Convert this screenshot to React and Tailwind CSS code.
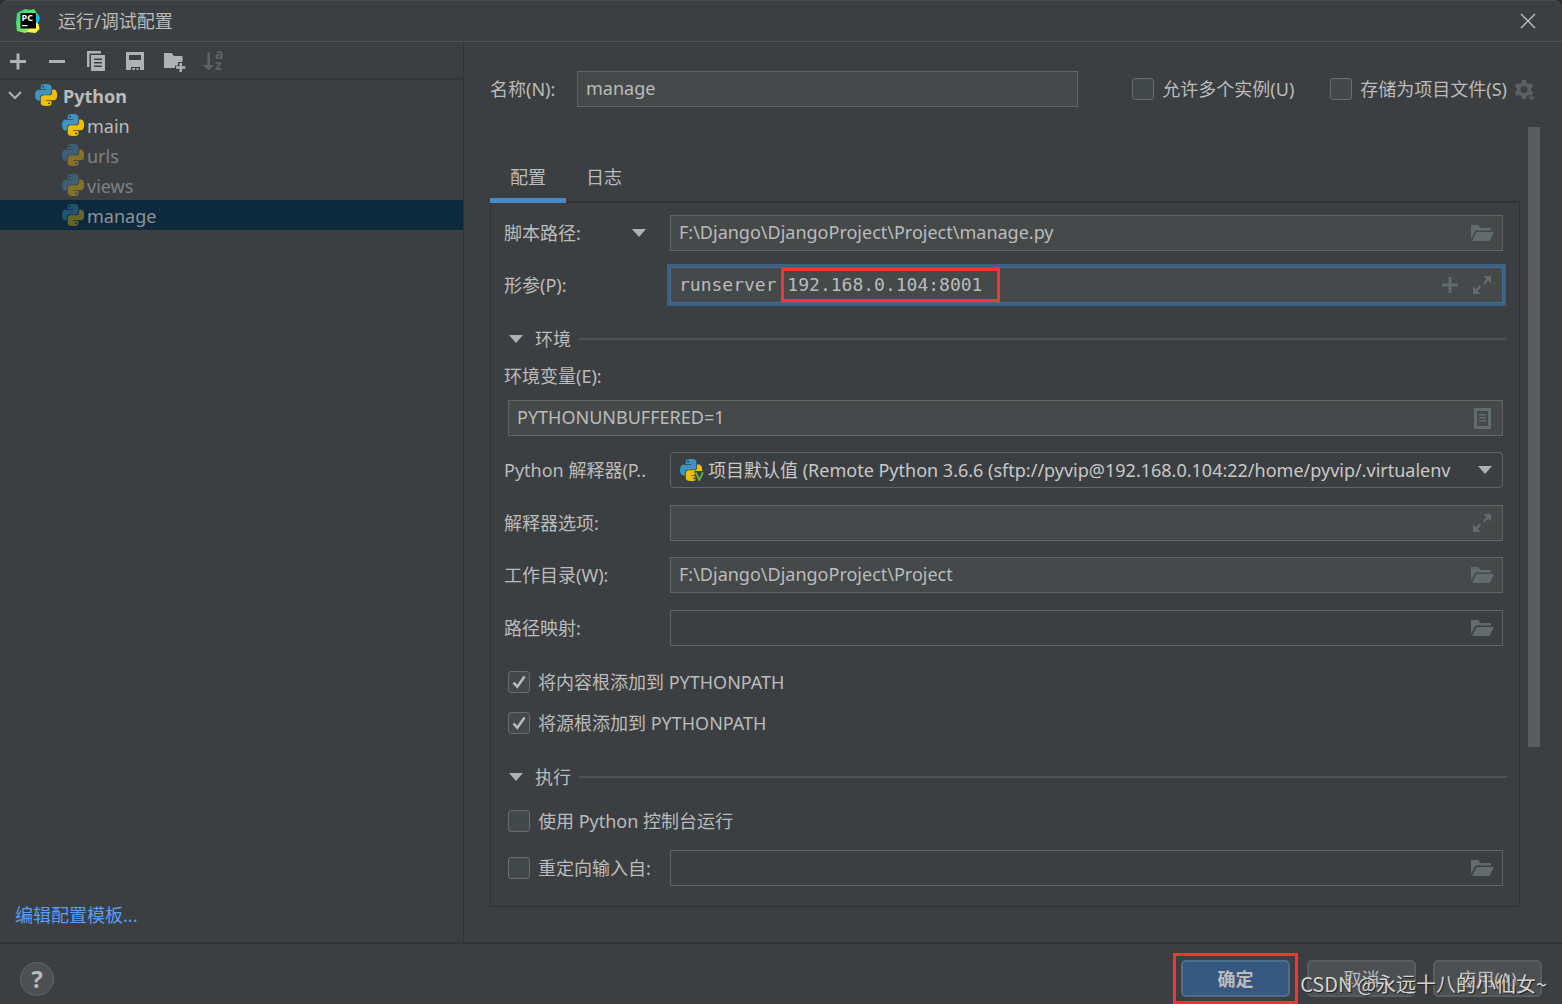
import React, { useState } from 'react';
import clsx from 'clsx';

function PythonIcon({ dim, venv }) {
    return (
        <svg viewBox="0 0 26 24" className={clsx('h-[22px] w-6 shrink-0', dim && 'opacity-40')} aria-hidden="true">
            <path
                fill="#3e93c1"
                fillRule="evenodd"
                d="M14.25.18l.9.2.73.26.59.3.45.32.34.34.25.34.16.33.1.3.04.26.02.2-.01.13V8.5l-.05.63-.13.55-.21.46-.26.38-.3.31-.33.25-.35.19-.35.14-.33.1-.3.07-.26.04-.21.02H8.77l-.69.05-.59.14-.5.22-.41.27-.33.32-.27.35-.2.36-.15.37-.1.35-.07.32-.04.27-.02.21v3.06H3.17l-.21-.03-.28-.07-.32-.12-.35-.18-.36-.26-.36-.36-.35-.46-.32-.59-.28-.73-.21-.88-.14-1.05-.05-1.23.06-1.22.16-1.04.24-.87.32-.71.36-.57.4-.44.42-.33.42-.24.4-.16.36-.1.32-.05.24-.01h.16l.06.01h8.16v-.83H6.18l-.01-2.75-.02-.37.05-.34.11-.31.17-.28.25-.26.31-.23.38-.2.44-.18.51-.15.58-.12.64-.1.71-.06.77-.04.84-.02 1.27.05zM7.95 2.16l-.23.33-.08.41.08.41.23.34.33.22.41.09.41-.09.33-.22.23-.34.08-.41-.08-.41-.23-.33-.33-.22-.41-.09-.41.09z"
            />
            <path
                fill="#f0bf0a"
                fillRule="evenodd"
                d="M21.04 6.11l.28.06.32.12.35.18.36.27.36.35.35.47.32.59.28.73.21.88.14 1.04.05 1.23-.06 1.23-.16 1.04-.24.86-.32.71-.36.57-.4.45-.42.33-.42.24-.4.16-.36.09-.32.05-.24.02-.16-.01h-8.22v.82h5.84l.01 2.76.02.36-.05.34-.11.31-.17.29-.25.25-.31.24-.38.2-.44.17-.51.15-.58.13-.64.09-.71.07-.77.04-.84.01-1.27-.04-1.07-.14-.9-.2-.73-.25-.59-.3-.45-.33-.34-.34-.25-.34-.16-.33-.1-.3-.04-.25-.02-.2.01-.13v-5.34l.05-.64.13-.54.21-.46.26-.38.3-.32.33-.24.35-.2.35-.14.33-.1.3-.06.26-.04.21-.02.13-.01h5.84l.69-.05.59-.14.5-.21.41-.28.33-.32.27-.35.2-.36.15-.36.1-.35.07-.32.04-.28.02-.21V6.07h2.09zM14.57 20.36l-.23.33-.08.41.08.41.23.33.33.23.41.08.41-.08.33-.23.23-.33.08-.41-.08-.41-.23-.33-.33-.23-.41-.08-.41.08z"
            />
            {venv && (
                <>
                    <path d="M15.500 13H26v11h-9z" fill="#3c3f41" />
                    <path d="M17 14.500l4 8.500 4-8.500" fill="none" stroke="#62b543" strokeWidth="2" />
                </>
            )}
        </svg>
    );
}

function AppLogo() {
    return (
        <svg viewBox="0 0 24 24" className="size-6" aria-hidden="true">
            <defs>
                <linearGradient id="logo" x1="0" y1="0" x2="1" y2="1">
                    <stop offset="0" stopColor="#21d789" />
                    <stop offset="0.5" stopColor="#5fe36b" />
                    <stop offset="1" stopColor="#fcf84a" />
                </linearGradient>
            </defs>
            <path d="M1 4l8-4 5 1 4-1 4 6v14l-4 3-4-1-5 2-8-2-1-8z" fill="url(#logo)" />
            <path d="M19 6l3-1 2 4-2 5-3-1z" fill="#07c3f2" />
            <path d="M19.500 14l3 1 1 5-4 4-9-1 4-4z" fill="#fcf84a" />
            <path d="M4.500 4h15.500v15.500H4.500z" fill="#000" />
            <text x="5.500" y="12" fontSize="9" fontWeight="700" fontFamily="Open Sans, sans-serif" fill="#fff">PC</text>
            <path d="M6 16h5.500v1.300H6z" fill="#fff" />
        </svg>
    );
}

const FolderIcon = () => (
    <svg viewBox="0 0 24 18" className="h-[18px] w-6" fill="#646b6e" aria-hidden="true">
        <path d="M1 1h7l2.500 3H21v2.500H5.500L1 15z" />
        <path d="M6.500 8H24l-4.500 9H2z" />
    </svg>
);

const ExpandIcon = () => (
    <svg viewBox="0 0 18 18" className="size-[18px]" fill="#646b6e" aria-hidden="true">
        <path d="M10.500 0H18v7.500l-2.700-2.700-3.800 3.700-1.600-1.600 3.500-4z" />
        <path d="M7.500 18H0v-7.500l2.700 2.700 3.800-3.700 1.600 1.600-3.500 4z" />
    </svg>
);

const PlusIcon = () => (
    <svg viewBox="0 0 16 16" className="size-4" fill="#646b6e" aria-hidden="true">
        <path d="M6.500 0h3v6.500H16v3H9.500V16h-3V9.500H0v-3h6.500z" />
    </svg>
);

const ListIcon = () => (
    <svg viewBox="0 0 17 21" className="h-[21px] w-[17px]" fill="#646b6e" aria-hidden="true">
        <path fillRule="evenodd" d="M0 0h17v21H0zM3 3v15h11V3z" />
        <path d="M5 6h7v1.500H5zM5 9h7v1.500H5zM5 12h7v1.500H5z" />
    </svg>
);

const Triangle = () => (
    <svg viewBox="0 0 14 8" className="h-2 w-3.5 shrink-0" fill="#afb1b3" aria-hidden="true">
        <path d="M0 0h14L7 8z" />
    </svg>
);

const toolbar = [
    { label: '添加', icon: <path d="M8.500 2.500h3V9H18v3h-6.500v6.500h-3V12H2V9h6.500z" /> },
    { label: '移除', icon: <path d="M2 9h16v3H2z" /> },
    {
        label: '复制',
        icon: (
            <>
                <path d="M1 0h14v2.500H3.500V16H1z" />
                <path fillRule="evenodd" d="M5 4h14v16H5zM8 7.500V9h8V7.500zM8 11v1.500h8V11zM8 14.500V16h8v-1.500z" />
            </>
        ),
    },
    { label: '保存', icon: <path fillRule="evenodd" d="M1 1h18v18h-4v-3H6v3H1zM4 4v5h12V4zM7.500 17h2.500v2H7.500zM11.500 17h2v2h-2z" /> },
    {
        label: '新建文件夹',
        icon: (
            <>
                <path d="M0 2h7.500L10 5h8.500v6H14v3.500h-3V17H0z" />
                <path d="M15.500 12h2.500v3.200h3.500v2.600H18V21h-2.500v-3.200H12v-2.600h3.500z" />
            </>
        ),
    },
    {
        label: '排序',
        off: true,
        icon: (
            <>
                <path d="M4.500 1.500h2.500V14H11l-5.200 5.500L0 14h4.500z" />
                <text x="12" y="8" fontSize="14" fontWeight="700" fontFamily="Open Sans, sans-serif">a</text>
                <text x="12" y="19" fontSize="14" fontWeight="700" fontFamily="Open Sans, sans-serif">z</text>
            </>
        ),
    },
];

const configs = [
    { name: 'main' },
    { name: 'urls', dim: true },
    { name: 'views', dim: true },
    { name: 'manage', dim: true },
];

function Checkbox({ id, label, defaultChecked }) {
    return (
        <label htmlFor={id} className="flex items-center gap-2 whitespace-nowrap">
            <span className="grid place-items-center">
                <input
                    id={id}
                    type="checkbox"
                    defaultChecked={defaultChecked}
                    className="peer col-start-1 row-start-1 size-[22px] appearance-none rounded-[3px] border border-[#6b6b6b] bg-[#43494a]"
                />
                <svg viewBox="0 0 14 14" className="pointer-events-none invisible col-start-1 row-start-1 size-3.5 peer-checked:visible" aria-hidden="true">
                    <path d="M1.500 7.500l3.800 4.200L12.500 1.500" fill="none" stroke="#bbb" strokeWidth="2.500" />
                </svg>
            </span>
            {label}
        </label>
    );
}

function Field({ id, value = '', plain, mono, focused, actions, children }) {
    return (
        <div
            className={clsx(
                'relative flex h-9 min-w-0 flex-1 items-center gap-3 border pr-2 pl-2',
                plain ? 'bg-[#3c3f41]' : 'bg-[#45494a]',
                focused ? 'border-[#466d94] ring-3 ring-[#3d6185]' : 'border-[#646464]'
            )}
        >
            <input
                id={id}
                defaultValue={value}
                className={clsx('min-w-0 flex-1 bg-transparent outline-none', mono ? "font-['DejaVu_Sans_Mono',monospace]" : 'pb-0.5')}
            />
            {actions}
            {children}
        </div>
    );
}

function IconButton({ label, children }) {
    return (
        <button type="button" aria-label={label} className="flex w-6 shrink-0 items-center justify-center">
            {children}
        </button>
    );
}

function Row({ id, label, className, extra, children }) {
    return (
        <div className={clsx('mr-1 flex items-center', className)}>
            <div className="flex w-[166px] shrink-0 items-center justify-between pr-6">
                <label htmlFor={id} className="whitespace-nowrap">{label}</label>
                {extra}
            </div>
            {children}
        </div>
    );
}

function Section({ title, className }) {
    return (
        <button type="button" className={clsx('flex h-7 w-full items-center pl-[5px]', className)}>
            <Triangle />
            <span className="ml-3">{title}</span>
            <span className="ml-2 h-0.5 flex-1 bg-[#505355]" />
        </button>
    );
}

export default function App() {
    const [selected, setSelected] = useState('manage');
    const [tab, setTab] = useState('配置');

    const browse = <IconButton label="浏览"><FolderIcon /></IconButton>;

    return (
        <div className="bg-[#2b2b2b]">
            <div className="relative flex min-h-screen flex-col overflow-hidden rounded-t-lg border-t border-[#4b4b4b] bg-[#3c3f41] font-['Noto_Sans','Noto_Sans_CJK_SC',sans-serif] text-[18px] leading-6 text-[#bbbbbb]">
                {/* Title bar */}
                <header className="flex h-[41px] items-center border-b border-[#515456] pr-6 pl-4">
                    <AppLogo />
                    <h1 className="ml-[18px] flex-1">运行/调试配置</h1>
                    <button type="button" aria-label="关闭" className="p-0.5">
                        <svg viewBox="0 0 16 16" className="size-4" stroke="#bbb" strokeWidth="1.500" aria-hidden="true">
                            <path d="M1 1l14 14M15 1L1 15" />
                        </svg>
                    </button>
                </header>

                <div className="flex flex-1">
                    {/* Configuration tree */}
                    <aside className="flex w-[464px] shrink-0 flex-col border-r border-[#323232]">
                        <div className="flex h-[38px] items-center gap-[19px] border-b-2 border-[#353637] pt-0.5 pl-2">
                            {toolbar.map((t) => (
                                <button key={t.label} type="button" aria-label={t.label} disabled={t.off}>
                                    <svg viewBox="0 0 20 21" className={clsx('h-[21px] w-5 overflow-visible', t.off ? 'fill-[#606365]' : 'fill-[#afb1b3]')} aria-hidden="true">
                                        {t.icon}
                                    </svg>
                                </button>
                            ))}
                        </div>
                        <div className="flex h-[30px] items-center pl-2 font-bold">
                            <svg viewBox="0 0 14 9" className="mr-[13px] h-[9px] w-3.5" fill="none" stroke="#afb1b3" strokeWidth="2" aria-hidden="true">
                                <path d="M1 1l6 6 6-6" />
                            </svg>
                            <PythonIcon />
                            <span className="ml-1 pt-0.5">Python</span>
                        </div>
                        <ul>
                            {configs.map((c) => (
                                <li key={c.name}>
                                    <button
                                        type="button"
                                        onClick={() => setSelected(c.name)}
                                        className={clsx('flex h-[30px] w-full items-center pl-[62px]', selected === c.name && 'bg-[#0d293e]')}
                                    >
                                        <PythonIcon dim={c.dim} />
                                        <span className={clsx('ml-px pt-0.5', c.dim && (selected === c.name ? 'text-[#8f9496]' : 'text-[#808080]'))}>{c.name}</span>
                                    </button>
                                </li>
                            ))}
                        </ul>
                        <a href="#templates" className="mt-auto mb-[15px] ml-[15px] self-start text-[#589df6]">编辑配置模板...</a>
                    </aside>

                    {/* Editor */}
                    <main className="flex min-w-0 flex-1 flex-col pt-[29px] pr-[22px] pl-[26px]">
                        <div className="flex items-center">
                            <label htmlFor="name" className="w-[87px] shrink-0">名称(N):</label>
                            <Field id="name" value="manage" />
                            <div className="ml-[54px] flex items-center gap-9 pr-[3px]">
                                <Checkbox id="multi" label="允许多个实例(U)" />
                                <div className="flex items-center gap-1.5">
                                    <Checkbox id="store" label="存储为项目文件(S)" />
                                    <button type="button" aria-label="设置">
                                        <svg viewBox="0 0 24 24" className="mt-1 size-6" fill="#5d6062" aria-hidden="true">
                                            <path fillRule="evenodd" d="M9 1h4l.6 2.800 1.900 1.100 2.700-.9 2 3.500-2.100 1.900v2.200l2.100 1.900-2 3.500-2.700-.9-1.900 1.100L13 20H9l-.6-2.800-1.900-1.100-2.700.9-2-3.500 2.100-1.900V9.400L1.800 7.500l2-3.500 2.700.9 1.900-1.100zM11 7a3.500 3.500 0 100 7 3.500 3.500 0 000-7z" />
                                            <path d="M14 17h9l-4.500 5z" stroke="#3c3f41" />
                                        </svg>
                                    </button>
                                </div>
                            </div>
                        </div>

                        <div className="mt-5 flex flex-1 items-start gap-2">
                            <div className="min-w-0 flex-1 pt-[26px]">
                                <div role="tablist" className="flex border-b-2 border-[#323232]">
                                    {['配置', '日志'].map((t) => (
                                        <button
                                            key={t}
                                            type="button"
                                            role="tab"
                                            aria-selected={tab === t}
                                            onClick={() => setTab(t)}
                                            className={clsx('-mb-0.5 h-[50px] border-b-5 px-5 pt-0.5', tab === t ? 'border-[#4a88c7]' : 'border-transparent')}
                                        >
                                            {t}
                                        </button>
                                    ))}
                                </div>

                                <div className="border border-t-0 border-[#323232] pt-3 pr-3 pb-5 pl-[13px]">
                                    <Row id="script" label="脚本路径:" extra={<button type="button" aria-label="脚本类型"><Triangle /></button>}>
                                        <Field id="script" value="F:\Django\DjangoProject\Project\manage.py" actions={browse} />
                                    </Row>
                                    <Row id="params" label="形参(P):" className="mt-4">
                                        <Field
                                            id="params"
                                            value="runserver 192.168.0.104:8001"
                                            mono
                                            focused
                                            actions={
                                                <div className="flex gap-2">
                                                    <IconButton label="插入宏"><PlusIcon /></IconButton>
                                                    <IconButton label="展开"><ExpandIcon /></IconButton>
                                                </div>
                                            }
                                        >
                                            <span className="pointer-events-none absolute inset-y-0 left-[110px] w-[219px] border-3 border-[#fa3332]" />
                                        </Field>
                                    </Row>

                                    <Section title="环境" className="mt-[22px]" />
                                    <div className="mt-[11px] mr-1">
                                        <label htmlFor="env" className="block">环境变量(E):</label>
                                        <div className="mt-3 ml-1 flex">
                                            <Field id="env" value="PYTHONUNBUFFERED=1" actions={<IconButton label="编辑变量"><ListIcon /></IconButton>} />
                                        </div>
                                    </div>

                                    <Row id="sdk" label="Python 解释器(P.." className="mt-4">
                                        <div className="flex h-9 min-w-0 flex-1 items-center rounded-[4px] border border-[#646464] pr-2.5 pl-[9px]">
                                            <PythonIcon venv />
                                            <select id="sdk" className="ml-1 min-w-0 flex-1 appearance-none overflow-hidden bg-transparent text-[#c8c8c8] outline-none">
                                                <option>项目默认值 (Remote Python 3.6.6 (sftp://pyvip@192.168.0.104:22/home/pyvip/.virtualenv</option>
                                            </select>
                                            <span className="ml-2.5"><Triangle /></span>
                                        </div>
                                    </Row>
                                    <Row id="opts" label="解释器选项:" className="mt-[17px]">
                                        <Field id="opts" actions={<IconButton label="展开"><ExpandIcon /></IconButton>} />
                                    </Row>
                                    <Row id="cwd" label="工作目录(W):" className="mt-4">
                                        <Field id="cwd" value="F:\Django\DjangoProject\Project" actions={browse} />
                                    </Row>
                                    <Row id="mapping" label="路径映射:" className="mt-[17px]">
                                        <Field id="mapping" plain actions={browse} />
                                    </Row>

                                    <div className="mt-6 ml-1 flex flex-col gap-[17px]">
                                        <Checkbox id="content" label="将内容根添加到 PYTHONPATH" defaultChecked />
                                        <Checkbox id="source" label="将源根添加到 PYTHONPATH" defaultChecked />
                                    </div>

                                    <Section title="执行" className="mt-7" />
                                    <div className="mt-[18px] ml-1">
                                        <Checkbox id="console" label="使用 Python 控制台运行" />
                                    </div>
                                    <div className="mt-[17px] mr-1 ml-1 flex items-center">
                                        <div className="w-[162px] shrink-0">
                                            <Checkbox id="redirect" label="重定向输入自:" />
                                        </div>
                                        <Field id="redirect-path" plain actions={browse} />
                                    </div>
                                </div>
                            </div>
                            <div className="h-[620px] w-3 bg-[#5b5c5e]" />
                        </div>
                    </main>
                </div>

                {/* Footer */}
                <footer className="relative flex h-[62px] items-start border-t-2 border-[#323232] pt-4 pr-5 pl-5">
                    <button type="button" className="mt-0.5 size-[34px] rounded-full border border-[#636668] bg-[#4c5052] text-[24px] leading-8 font-bold">?</button>
                    <div className="ml-auto flex gap-[17px]">
                        <div className="relative">
                            <button type="button" className="h-[37px] w-[109px] rounded-[5px] border-2 border-[#4c708c] bg-[#365880] font-bold">确定</button>
                            <span className="pointer-events-none absolute -inset-x-2 -top-[7px] h-[51px] border-3 border-[#fa3332]" />
                        </div>
                        <button type="button" className="h-[37px] w-[109px] rounded-[5px] border-2 border-[#5a5d5e] bg-[#4c5052]">取消</button>
                        <button type="button" className="h-[37px] w-[109px] rounded-[5px] border-2 border-[#5a5d5e] bg-[#4c5052]">应用(A)</button>
                    </div>
                    <span className="pointer-events-none absolute right-[15px] bottom-2 font-['Noto_Sans_CJK_SC',sans-serif] text-[20px] whitespace-nowrap text-[#d4d4d4] text-shadow-[1px_1px_1px_#222]">
                        CSDN @永远十八的小仙女~
                    </span>
                </footer>
            </div>
        </div>
    );
}
